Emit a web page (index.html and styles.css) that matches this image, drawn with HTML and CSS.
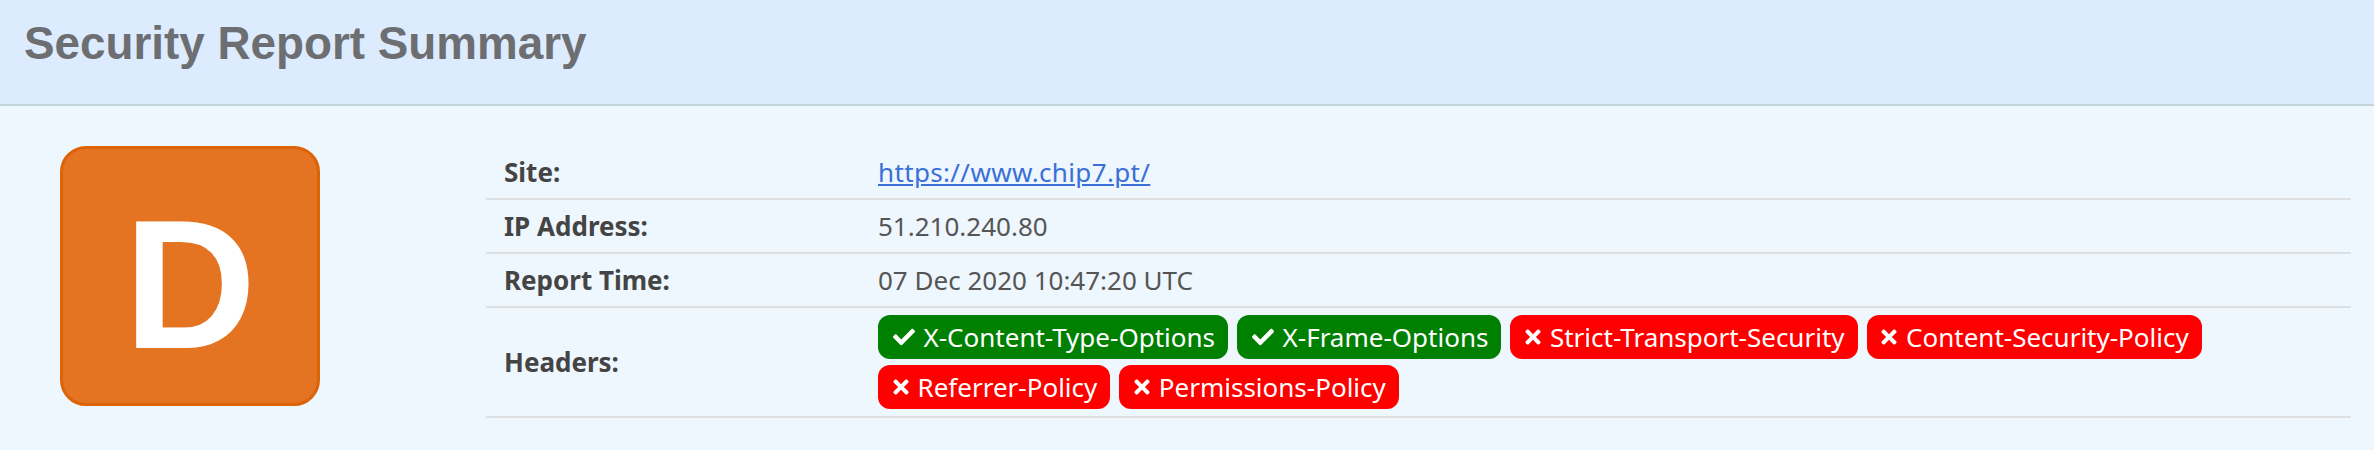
FILE: index.html
```html
<!DOCTYPE html>
<html lang="en">
<head>
<meta charset="utf-8">
<title>Security Report Summary</title>
<link rel="stylesheet" href="styles.css">
</head>
<body>
<header class="topbar">
  <h1 class="title">Security Report Summary</h1>
</header>
<main class="summary">
  <div class="grade-col">
    <div class="grade">D</div>
  </div>
  <table class="report">
    <tr>
      <th>Site:</th>
      <td><a class="site-link" href="#">https://www.chip7.pt/</a></td>
    </tr>
    <tr>
      <th>IP Address:</th>
      <td>51.210.240.80</td>
    </tr>
    <tr>
      <th>Report Time:</th>
      <td>07 Dec 2020 10:47:20 UTC</td>
    </tr>
    <tr>
      <th>Headers:</th>
      <td>
        <div class="badges">
          <span class="badge ok"><svg class="ico ico-check" viewBox="0 0 512 512"><path d="M173.9 439.4l-166.4-166.4c-10-10-10-26.2 0-36.2l36.2-36.2c10-10 26.2-10 36.2 0L192 312.7 432.1 72.6c10-10 26.2-10 36.2 0l36.2 36.2c10 10 10 26.2 0 36.2l-294.4 294.4c-10 10-26.2 10-36.2 0z"/></svg>X-Content-Type-Options</span>
          <span class="badge ok"><svg class="ico ico-check" viewBox="0 0 512 512"><path d="M173.9 439.4l-166.4-166.4c-10-10-10-26.2 0-36.2l36.2-36.2c10-10 26.2-10 36.2 0L192 312.7 432.1 72.6c10-10 26.2-10 36.2 0l36.2 36.2c10 10 10 26.2 0 36.2l-294.4 294.4c-10 10-26.2 10-36.2 0z"/></svg>X-Frame-Options</span>
          <span class="badge bad"><svg class="ico ico-times" viewBox="0 0 352 512"><path d="M242.7 256l100.1-100.1c12.3-12.3 12.3-32.2 0-44.5l-22.2-22.2c-12.3-12.3-32.2-12.3-44.5 0L176 189.3 75.9 89.2c-12.3-12.3-32.2-12.3-44.5 0L9.2 111.5c-12.3 12.3-12.3 32.2 0 44.5L109.3 256 9.2 356.1c-12.3 12.3-12.3 32.2 0 44.5l22.2 22.2c12.3 12.3 32.2 12.3 44.5 0L176 322.7l100.1 100.1c12.3 12.3 32.2 12.3 44.5 0l22.2-22.2c12.3-12.3 12.3-32.2 0-44.5L242.7 256z"/></svg>Strict-Transport-Security</span>
          <span class="badge bad"><svg class="ico ico-times" viewBox="0 0 352 512"><path d="M242.7 256l100.1-100.1c12.3-12.3 12.3-32.2 0-44.5l-22.2-22.2c-12.3-12.3-32.2-12.3-44.5 0L176 189.3 75.9 89.2c-12.3-12.3-32.2-12.3-44.5 0L9.2 111.5c-12.3 12.3-12.3 32.2 0 44.5L109.3 256 9.2 356.1c-12.3 12.3-12.3 32.2 0 44.5l22.2 22.2c12.3 12.3 32.2 12.3 44.5 0L176 322.7l100.1 100.1c12.3 12.3 32.2 12.3 44.5 0l22.2-22.2c12.3-12.3 12.3-32.2 0-44.5L242.7 256z"/></svg>Content-Security-Policy</span>
          <span class="badge bad"><svg class="ico ico-times" viewBox="0 0 352 512"><path d="M242.7 256l100.1-100.1c12.3-12.3 12.3-32.2 0-44.5l-22.2-22.2c-12.3-12.3-32.2-12.3-44.5 0L176 189.3 75.9 89.2c-12.3-12.3-32.2-12.3-44.5 0L9.2 111.5c-12.3 12.3-12.3 32.2 0 44.5L109.3 256 9.2 356.1c-12.3 12.3-12.3 32.2 0 44.5l22.2 22.2c12.3 12.3 32.2 12.3 44.5 0L176 322.7l100.1 100.1c12.3 12.3 32.2 12.3 44.5 0l22.2-22.2c12.3-12.3 12.3-32.2 0-44.5L242.7 256z"/></svg>Referrer-Policy</span>
          <span class="badge bad"><svg class="ico ico-times" viewBox="0 0 352 512"><path d="M242.7 256l100.1-100.1c12.3-12.3 12.3-32.2 0-44.5l-22.2-22.2c-12.3-12.3-32.2-12.3-44.5 0L176 189.3 75.9 89.2c-12.3-12.3-32.2-12.3-44.5 0L9.2 111.5c-12.3 12.3-12.3 32.2 0 44.5L109.3 256 9.2 356.1c-12.3 12.3-12.3 32.2 0 44.5l22.2 22.2c12.3 12.3 32.2 12.3 44.5 0L176 322.7l100.1 100.1c12.3 12.3 32.2 12.3 44.5 0l22.2-22.2c12.3-12.3 12.3-32.2 0-44.5L242.7 256z"/></svg>Permissions-Policy</span>
        </div>
      </td>
    </tr>
  </table>
</main>
</body>
</html>
```

FILE: styles.css
```css
html, body {
  margin: 0;
  padding: 0;
}

body {
  background: #eef6fe;
  font-family: "Noto Sans", "Open Sans", "Liberation Sans", sans-serif;
  font-size: 26px;
  color: #555;
}

.topbar {
  box-sizing: border-box;
  height: 106px;
  padding: 18px 24px 0;
  background: #dcebfd;
  border-bottom: 2px solid #c5d4db;
}

.title {
  margin: 0;
  font-family: "Liberation Sans", Arial, sans-serif;
  font-weight: bold;
  font-size: 45.8px;
  line-height: 52px;
  color: #6c6e72;
}

.summary {
  display: flex;
  align-items: flex-start;
  padding: 40px 23px 0 24px;
}

.grade-col {
  flex: none;
  box-sizing: border-box;
  width: 462px;
  padding: 0 0 0 36px;
}

.grade {
  box-sizing: border-box;
  width: 260px;
  height: 260px;
  padding-top: 16px;
  display: flex;
  align-items: center;
  justify-content: center;
  background: #e57422;
  border: 3px solid #dc6308;
  border-radius: 26px;
  color: #fff;
  font-family: "Liberation Sans", Arial, sans-serif;
  font-weight: bold;
  font-size: 183px;
  line-height: 1;
}

.report {
  flex: 1;
  border-collapse: collapse;
}

.report tr {
  border-bottom: 2px solid #dedfe0;
}

.report th,
.report td {
  padding: 7px 18px;
  line-height: 38px;
  vertical-align: middle;
  text-align: left;
}

.report th {
  width: 338px;
  font-weight: bold;
  color: #444;
}

.report td {
  color: #555;
}

.site-link {
  color: #3a6fd8;
  text-decoration: underline;
  letter-spacing: 0.35px;
}

.badges {
  display: flex;
  flex-wrap: wrap;
  gap: 6px 9px;
}

.badge {
  display: inline-flex;
  align-items: center;
  height: 44px;
  padding: 0 13px 0 14.5px;
  border-radius: 12px;
  color: #fff;
  line-height: 38px;
}

.badge.ok {
  background: #008000;
}

.badge.bad {
  background: #ff0000;
}

.ico {
  fill: #fff;
  flex: none;
}

.ico-check {
  width: 22px;
  height: 22px;
  margin-right: 9px;
}

.ico-times {
  width: 16px;
  height: 22px;
  margin-right: 9px;
}
```
